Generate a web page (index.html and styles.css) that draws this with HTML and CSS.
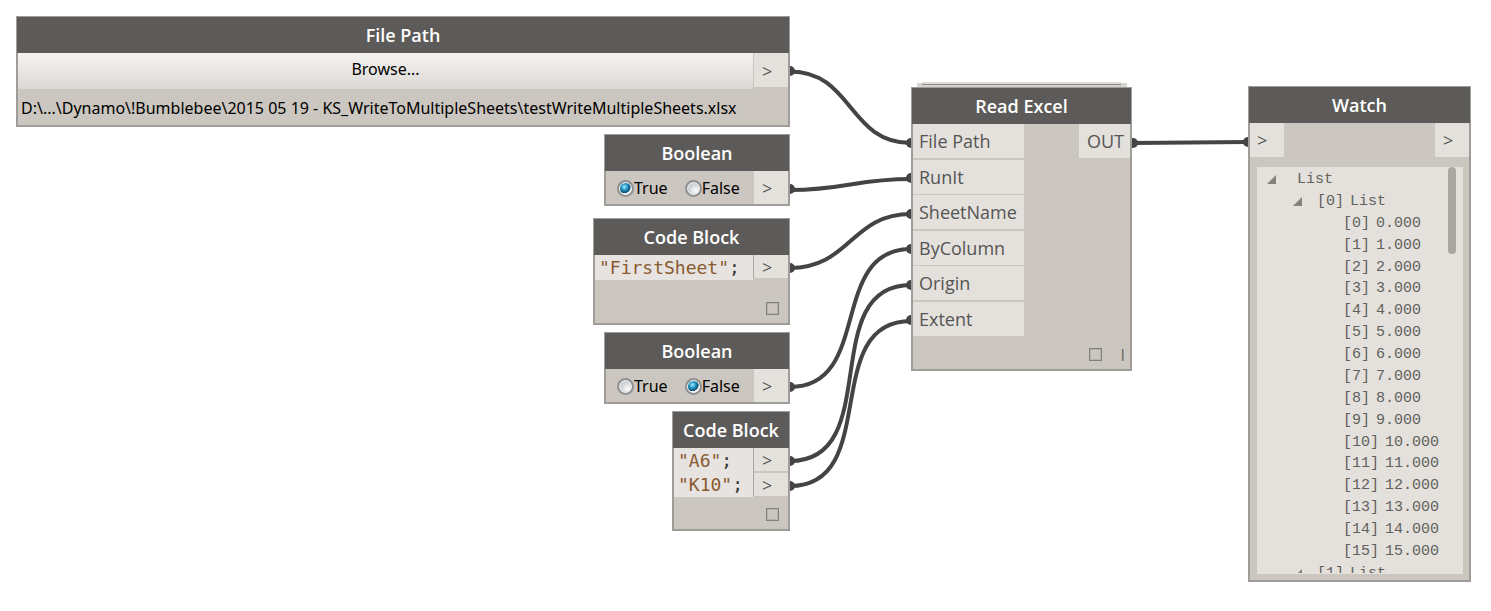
FILE: index.html
```html
<!DOCTYPE html>
<html lang="en">
<head>
<meta charset="utf-8">
<title>Read Excel graph</title>
<link rel="stylesheet" href="styles.css">
</head>
<body>
<main class="canvas">
  <svg class="wires" width="100%" height="100%" aria-hidden="true">
    <g class="wire">
      <path d="M790 71.5C853 71.5 848 143 911 143"/>
      <path d="M790 190C845 190 856 179 911 179"/>
      <path d="M790 268C850 268 851 214 911 214"/>
      <path d="M790 387C873 387 828 249 911 249"/>
      <path d="M790 461C885 461 816 285 911 285"/>
      <path d="M790 486C882 486 819 321 911 321"/>
      <path d="M1132 143L1248 142"/>
    </g>
    <g class="ends">
      <circle cx="790" cy="71" r="5"/><circle cx="911" cy="143" r="5"/>
      <circle cx="790" cy="189" r="5"/><circle cx="911" cy="178" r="5"/>
      <circle cx="790" cy="268" r="5"/><circle cx="911" cy="214" r="5"/>
      <circle cx="790" cy="387" r="5"/><circle cx="911" cy="249" r="5"/>
      <circle cx="790" cy="461" r="5"/><circle cx="911" cy="285" r="5"/>
      <circle cx="790" cy="486" r="5"/><circle cx="911" cy="320" r="5"/>
      <circle cx="1133" cy="143" r="5"/><circle cx="1248" cy="142" r="5"/>
    </g>
  </svg>

  <section class="node node-file">
    <h2 class="title">File Path</h2>
    <div class="row">
      <button class="browse" type="button">Browse...</button>
      <span class="port port-framed">&gt;</span>
    </div>
    <p class="path">D:\...\Dynamo\!Bumblebee\2015 05 19 - KS_WriteToMultipleSheets\testWriteMultipleSheets.xlsx</p>
  </section>

  <section class="node node-bool-a">
    <h2 class="title">Boolean</h2>
    <div class="row">
      <div class="choices">
        <label class="choice"><input class="radio" type="radio" name="run" checked>True</label>
        <label class="choice"><input class="radio" type="radio" name="run">False</label>
      </div>
      <span class="port port-low">&gt;</span>
    </div>
  </section>

  <section class="node node-code-a">
    <h2 class="title">Code Block</h2>
    <div class="row">
      <code class="code"><span class="string">"FirstSheet"</span>;</code>
      <div class="outs"><span class="port port-short">&gt;</span></div>
    </div>
    <div class="foot foot-tall"><span class="box"></span></div>
  </section>

  <section class="node node-bool-b">
    <h2 class="title">Boolean</h2>
    <div class="row">
      <div class="choices">
        <label class="choice"><input class="radio" type="radio" name="column">True</label>
        <label class="choice"><input class="radio" type="radio" name="column" checked>False</label>
      </div>
      <span class="port port-low">&gt;</span>
    </div>
  </section>

  <section class="node node-code-b">
    <h2 class="title">Code Block</h2>
    <div class="row">
      <code class="code"><span class="string">"A6"</span>;<br><span class="string">"K10"</span>;</code>
      <div class="outs"><span class="port port-short">&gt;</span><span class="port port-short">&gt;</span></div>
    </div>
    <div class="foot"><span class="box"></span></div>
  </section>

  <section class="node node-read">
    <div class="stack"></div>
    <h2 class="title">Read Excel</h2>
    <div class="row row-split">
      <div class="inputs">
        <span class="label">File Path</span>
        <span class="label">RunIt</span>
        <span class="label">SheetName</span>
        <span class="label">ByColumn</span>
        <span class="label">Origin</span>
        <span class="label">Extent</span>
      </div>
      <span class="label label-out">OUT</span>
    </div>
    <div class="foot foot-read"><span class="box"></span><span class="lacing">I</span></div>
  </section>

  <section class="node node-watch">
    <h2 class="title">Watch</h2>
    <div class="row row-split">
      <span class="port port-in">&gt;</span>
      <span class="port">&gt;</span>
    </div>
    <div class="viewer">
      <ul class="tree">
        <li class="item"><svg class="arrow" viewBox="0 0 9 9"><path d="M0 9L9 0V9Z"/></svg><span class="root">List</span></li>
        <li class="item item-list"><svg class="arrow" viewBox="0 0 9 9"><path d="M0 9L9 0V9Z"/></svg><span class="index">[0]</span>List</li>
        <li class="item item-leaf"><span>[0]</span>0.000</li>
        <li class="item item-leaf"><span>[1]</span>1.000</li>
        <li class="item item-leaf"><span>[2]</span>2.000</li>
        <li class="item item-leaf"><span>[3]</span>3.000</li>
        <li class="item item-leaf"><span>[4]</span>4.000</li>
        <li class="item item-leaf"><span>[5]</span>5.000</li>
        <li class="item item-leaf"><span>[6]</span>6.000</li>
        <li class="item item-leaf"><span>[7]</span>7.000</li>
        <li class="item item-leaf"><span>[8]</span>8.000</li>
        <li class="item item-leaf"><span>[9]</span>9.000</li>
        <li class="item item-leaf"><span>[10]</span>10.000</li>
        <li class="item item-leaf"><span>[11]</span>11.000</li>
        <li class="item item-leaf"><span>[12]</span>12.000</li>
        <li class="item item-leaf"><span>[13]</span>13.000</li>
        <li class="item item-leaf"><span>[14]</span>14.000</li>
        <li class="item item-leaf"><span>[15]</span>15.000</li>
        <li class="item item-list"><svg class="arrow" viewBox="0 0 9 9"><path d="M0 9L9 0V9Z"/></svg><span class="index">[1]</span>List</li>
      </ul>
      <div class="thumb"></div>
    </div>
  </section>
</main>
</body>
</html>
```
FILE: styles.css
```css
* { box-sizing: border-box; }
body {
  margin: 0;
  background: #fff;
  color: #000;
  font: 16px/24px "Noto Sans", "Open Sans", sans-serif;
}
.canvas { position: relative; min-height: 100vh; }
.wires { position: absolute; inset: 0; }
.wire { fill: none; stroke: #444; stroke-width: 4; }
.ends { fill: #444; }

.node {
  position: absolute;
  background: #cbc6bf;
  border: solid #9f9d99;
  border-width: 1px 2px 2px;
}
.node-file { left: 16px; top: 16px; width: 774px; }
.node-bool-a { left: 604px; top: 134px; width: 186px; }
.node-code-a { left: 593px; top: 218px; width: 197px; }
.node-bool-b { left: 604px; top: 332px; width: 186px; }
.node-code-b { left: 672px; top: 411px; width: 118px; }
.node-read { left: 911px; top: 87px; width: 221px; }
.node-watch { left: 1248px; top: 86px; width: 223px; }

.title {
  margin: 0 -1px;
  background: #5d5b59;
  color: #fff;
  font: 600 18px/36px "Open Sans", "Noto Sans", sans-serif;
  text-align: center;
}
.row { display: flex; align-items: flex-start; }
.row-split { justify-content: space-between; }

.port {
  flex: none;
  width: 34px;
  height: 34px;
  padding-left: 8px;
  background: #e4e1dc;
  color: #555;
  font: 18px/34px "Open Sans", "Noto Sans", sans-serif;
}
.port-framed { width: 35px; border-left: 1px solid #cbc6bf; line-height: 36px; }
.port-low { height: 33px; }
.port-in { padding-left: 7px; }
.port-short { height: 23px; line-height: 24px; }

.browse {
  flex: 1;
  height: 36px;
  padding: 0 0 4px;
  border: 0;
  background: linear-gradient(#f4f3f2, #dcd9d4);
  color: #000;
  font: inherit;
}
.path { margin: 0; padding: 7px 3px 5px; white-space: nowrap; }

.choices { flex: 1; display: flex; gap: 17px; padding-left: 11px; }
.choice { display: flex; align-items: center; height: 35px; margin-bottom: -2px; line-height: 35px; }
.radio {
  appearance: none;
  width: 17px;
  height: 17px;
  margin: 0;
  border: 2px solid #8e8f8f;
  border-radius: 50%;
  background: radial-gradient(circle at 65% 65%, #fff, #d0d3d6 50%, #c4c8cc);
  box-shadow: inset 0 0 0 1px #f4f4f4;
}
.radio:checked {
  background: radial-gradient(circle at 40% 35%, #b5ecf8 0, #2da3d0 28%, #0b4a6c 62%, transparent 66%) center / 11px 11px no-repeat #f0f2f3;
}

.code {
  flex: 1;
  padding: 1px 0 0 4px;
  background: #e6e3e0;
  color: #333;
  font: 18px/24px "DejaVu Sans Mono", "Liberation Mono", monospace;
}
.string { color: #8a5a30; }
.outs {
  display: grid;
  gap: 2px;
  border-left: 1px solid #aaa7a2;
}
.foot { display: flex; justify-content: flex-end; gap: 19px; padding: 11px 9px 8px; }
.foot-tall { padding-top: 22px; }
.foot-read { padding: 12px 5px 8px; }
.box { width: 13px; height: 13px; border: 1px solid #84817d; box-shadow: inset 0 0 0 1px #b5b1ab; }
.lacing { color: #666; line-height: 14px; font-family: "Open Sans", sans-serif; height: 13px; }

.stack {
  position: absolute;
  left: 4px;
  right: 3px;
  top: -5px;
  height: 4px;
  background: #d6d3ce;
}
.stack::before {
  content: "";
  position: absolute;
  left: 5px;
  right: 6px;
  top: -1px;
  height: 2px;
  background: #dddbd8;
  border-bottom: 1px solid #8f8d8a;
}
.inputs { display: grid; align-content: space-between; width: 111px; height: 212px; }
.label {
  height: 34px;
  padding: 0 6px;
  background: #e4e1dc;
  color: #555;
  font: 18px/35px "Open Sans", "Noto Sans", sans-serif;
}
.label-out { padding-left: 8px; }

.viewer {
  position: relative;
  height: 407px;
  margin: 10px 6px 6px 7px;
  overflow: hidden;
  border-bottom: 1px solid #e4e1dc;
  background: #e4e1dc;
}
.tree {
  display: grid;
  align-content: space-between;
  height: 417px;
  margin: 0;
  padding: 2px 0 0 10px;
  list-style: none;
  color: #625f5c;
  font: 15px/21px "Liberation Mono", "DejaVu Sans Mono", monospace;
}
.item { display: flex; align-items: center; gap: 6px; white-space: nowrap; }
.item-list { padding-left: 26px; }
.item-leaf { padding-left: 76px; }
.arrow { width: 9px; height: 9px; fill: #85827e; }
.root { padding-left: 15px; }
.index { padding-left: 9px; }
.thumb {
  position: absolute;
  top: 0;
  right: 7px;
  width: 8px;
  height: 87px;
  border-radius: 4px;
  background: #aaa7a2;
}
```
